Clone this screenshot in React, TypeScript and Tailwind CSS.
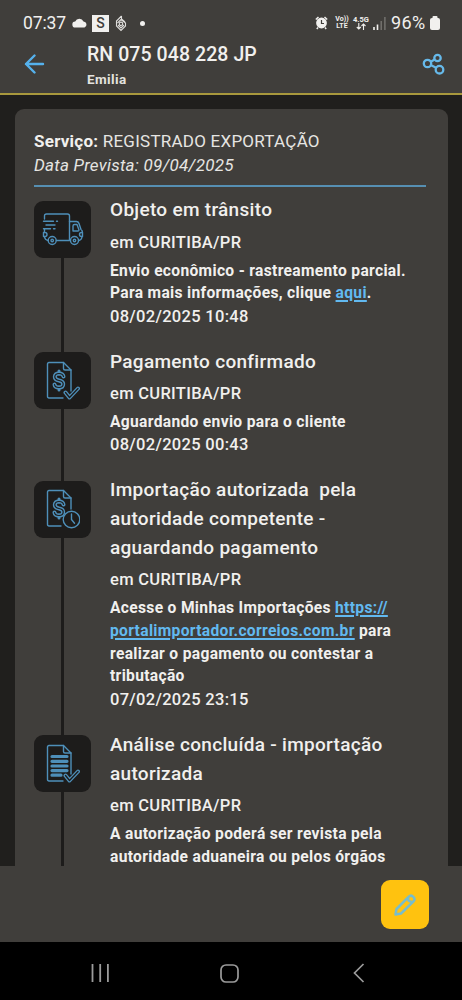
import type { ReactNode } from "react";

function DocIcon({ kind }: { kind: "paid" | "waiting" | "done" }) {
  return (
    <svg width="34" height="40" viewBox="0 0 34 40" fill="none" stroke="#4e8fb9" strokeWidth="1.4" strokeLinecap="round" strokeLinejoin="round">
      <path d={kind === "waiting" ? "M15 37H3q-1.5 0-1.5-1.5V3q0-1.5 1.5-1.5H17.5L25 9v11" : "M17 37H3q-1.5 0-1.5-1.5V3q0-1.5 1.5-1.5H17.5L25 9v21"} />
      <path d="M17.5 1.5V7.5q0 1.5 1.5 1.5H25" />
      {kind !== "done" && (
        <>
          <path d="M17.5 15.500q-.5-3-4.500-3t-4.200 3.300q0 2.900 4.200 3.700t4.200 3.500q0 3.500-4.200 3.500T8.500 23.500" strokeWidth="4" />
          <path d="M13 10v3M13 26v3" strokeWidth="3" />
          <path d="M17.5 15.500q-.5-3-4.500-3t-4.200 3.300q0 2.900 4.200 3.700t4.200 3.500q0 3.500-4.200 3.500T8.500 23.500" stroke="#1d1c1b" strokeWidth="1.2" />
        </>
      )}
      {kind === "done" && <path d="M6 12.5h15M6 17.3h15M6 22h15M6 26.6h15M6 31.2h9" strokeWidth="3.2" />}
      {kind === "waiting" ? (
        <>
          <circle cx="25.5" cy="30.5" r="8.300" fill="#1d1c1b" />
          <path d="M25.5 25v5.500l3 3.800" />
        </>
      ) : (
        <>
          <path d="M19.5 31.500l4 5 8.500-9" strokeWidth="4" />
          <path d="M19.5 31.500l4 5 8.500-9" stroke="#1d1c1b" strokeWidth="1.300" />
        </>
      )}
    </svg>
  );
}

function TruckIcon() {
  return (
    <svg width="42" height="34" viewBox="0 0 42 34" fill="none" stroke="#4e8fb9" strokeWidth="1.4" strokeLinecap="round" strokeLinejoin="round">
      <path d="M2.500 7V4q0-2 2-2H25.500q2 0 2 2V28.500M2.500 17v3M14.500 28.500H28M2.500 25q.5 3 3.500 3.500M1.500 20.500h1.500q2 0 2 2t-2 2H1.500z" />
      <path d="M27.500 9.500h7q1.800 0 2.500 2l2 6q1.500 1 1.500 3M40 25q-.5 3-3 3.500M31 19v-5q0-1.500 1.500-1.500h2.500l2 5.500q0 1-1 1zM40.500 20.500h-1q-2 0-2 2t2 2h1z" />
      <path d="M1.500 9.200h10M14.500 9.200h1M4 13h9M1.500 16.800h7M11.500 16.800h1.500" />
      <circle cx="10.200" cy="28.500" r="4" />
      <circle cx="10.200" cy="28.500" r="1.200" />
      <circle cx="32.500" cy="28.500" r="4" />
      <circle cx="32.500" cy="28.500" r="1.200" />
    </svg>
  );
}

function Event({ icon, title, date, children }: { icon: ReactNode; title: string[]; date?: string; children: ReactNode }) {
  return (
    <li className="relative flex">
      <div className="relative mr-[19px] w-[57px] shrink-0">
        <div className="absolute top-[5px] -bottom-[5px] left-[26.500px] w-[3.500px] bg-[#1d1c1b]" />
        <div className="relative mt-[4.500px] flex h-[57px] w-[57px] items-center justify-center rounded-[9px] bg-[#1d1c1b]">{icon}</div>
      </div>
      <div className="pb-[19.200px] whitespace-pre">
        <h2 className="text-[19px] leading-[28.800px] font-medium tracking-[0.300px]">
          {title.map((t) => <span key={t} className="block">{t}</span>)}
        </h2>
        <p className="mt-[6.700px] mb-[5px] text-[16.500px] leading-[22.800px] font-medium tracking-[0.300px]">em CURITIBA/PR</p>
        <div className="text-[15.600px] leading-[22.800px] font-bold tracking-[0.320px]">{children}</div>
        {date && <time className="mt-[0.500px] block text-[16.500px] leading-[22.800px] font-medium tracking-[0.300px]">{date}</time>}
      </div>
    </li>
  );
}

const link = "text-[#62b9f0] underline decoration-[1.500px] underline-offset-2";

export default function App() {
  return (
    <div className="flex h-[1000px] w-[462px] flex-col overflow-hidden bg-[#403e3b] font-['Roboto',sans-serif] text-[#f1f0ee]">
      <div className="flex h-[45px] shrink-0 items-center pt-px pr-[22px] pl-[23px]">
        <span className="w-[43px] text-[17.500px] tracking-[-0.100px] whitespace-nowrap">07:37</span>
        <svg className="ml-[6px]" width="16" height="10" viewBox="0 0 16 10" fill="#f1f0ee"><path d="M3.500 9.500a3 3 0 0 1-.3-6A4.500 4.500 0 0 1 11.500 3.500a3.100 3.100 0 0 1 1 6z" /></svg>
        <span className="ml-[4px] flex h-[17px] w-[17px] items-center justify-center bg-[#f1f0ee] text-[14px] font-medium text-[#403e3b]">S</span>
        <svg className="ml-[6px]" width="12" height="17" viewBox="0 0 12 17" fill="none" stroke="#dddcda" strokeWidth="1.100"><path d="M6.500 1L1.500 6v5l4.500 4.500 4.500-4.500V8L6 4.500 2.500 8M6.500 1v3L10 7M3 10l3 3 3-3" /><circle cx="6" cy="8.800" r="1.700" /></svg>
        <span className="ml-[13px] h-[5px] w-[5px] rounded-full bg-[#f1f0ee]" />
        <div className="ml-auto flex items-center">
          <svg width="13" height="14" viewBox="0 0 13 14"><circle cx="6.500" cy="7" r="5.400" fill="#f1f0ee" /><path d="M.8 3.500L3.500 1M12.200 3.500L9.500 1M3 11.500l-1.200 1.500M10 11.500l1.200 1.500" stroke="#f1f0ee" strokeWidth="1.500" /><path d="M6.500 4v3.500H9" fill="none" stroke="#403e3b" strokeWidth="1.200" /></svg>
          <span className="ml-[7px] w-[14px] text-center text-[7px] leading-[7px] font-bold whitespace-nowrap">Vo))<br />LTE</span>
          <span className="ml-[4px] flex w-[16px] flex-col items-center text-[7.500px] leading-[7px] font-bold">4.5G
            <svg width="10" height="7" viewBox="0 0 10 7" fill="none" stroke="#f1f0ee" strokeWidth="1.100"><path d="M2.800 0v6M.8 4l2 2 2-2M7.500 7V1M5.500 3l2-2 2 2" /></svg>
          </span>
          <svg className="ml-[4px]" width="13" height="13" viewBox="0 0 13 13"><path d="M1 13v-3M4.500 13V7.500" stroke="#f1f0ee" strokeWidth="1.600" /><path d="M8.200 13V4M11.900 13V0" stroke="#777572" strokeWidth="1.400" /></svg>
          <span className="ml-[5px] w-[36px] text-[18px] leading-[20px] tracking-[0.400px] whitespace-nowrap">96%</span>
          <svg className="ml-[3px]" width="10" height="14" viewBox="0 0 10 14" fill="#f1f0ee"><rect y="2" width="10" height="12" rx="2" /><rect x="2.500" width="5" height="4" rx="1" /></svg>
        </div>
      </div>
      <header className="flex h-[50px] shrink-0 items-start border-b-[2px] border-[#a8983d] pr-[17px] pl-[24px]">
        <svg className="mt-[9px]" width="21" height="20" viewBox="0 0 21 20" fill="none" stroke="#55b1ec" strokeWidth="2.400" strokeLinecap="round" strokeLinejoin="round"><path d="M10.500 1.500L2 10l8.500 8.500M2 10h17" /></svg>
        <div className="ml-[42px] whitespace-nowrap">
          <h1 className="-mt-[1px] text-[19.500px] leading-[22px] font-medium tracking-[0.080px]">RN 075 048 228 JP</h1>
          <p className="mt-[5px] text-[13.500px] leading-[16px] font-bold tracking-[0.400px] text-[#e3e2df]">Emilia</p>
        </div>
        <svg className="mt-[8px] ml-auto" width="23" height="23" viewBox="0 0 23 23" fill="none" stroke="#66b9ea" strokeWidth="2.300"><circle cx="5.500" cy="10.500" r="3.700" /><circle cx="15.500" cy="5" r="3.200" /><circle cx="17.500" cy="16.700" r="3.800" /><path d="M8.700 8.800l4-2.200M8.700 12l5.400 2.800" /></svg>
      </header>
      <main className="h-[771px] shrink-0 overflow-hidden bg-[#201f1d] pt-[14px] pr-[14px] pl-[15px]">
        <section className="h-[757px] overflow-hidden rounded-t-[9px] bg-[#403e3b] pt-[20px] pr-[22px] pl-[19px]">
          <div className="text-[17px] leading-[24px] tracking-[0.240px] whitespace-nowrap text-[#e6e5e2]">
            <p><strong className="font-bold text-[#f1f0ee]">Serviço:</strong> REGISTRADO EXPORTAÇÃO</p>
            <p className="italic">Data Prevista: 09/04/2025</p>
          </div>
          <div className="mt-[8px] h-[2px] bg-[#568fb2]" />
          <ol className="mt-[9.300px]">
            <Event icon={<TruckIcon />} title={["Objeto em trânsito"]} date="08/02/2025 10:48">
              Envio econômico - rastreamento parcial.<br />
              Para mais informações, clique <a className={link}>aqui</a>.
            </Event>
            <Event icon={<DocIcon kind="paid" />} title={["Pagamento confirmado"]} date="08/02/2025 00:43">Aguardando envio para o cliente</Event>
            <Event icon={<DocIcon kind="waiting" />} title={["Importação autorizada  pela", "autoridade competente -", "aguardando pagamento"]} date="07/02/2025 23:15">
              Acesse o Minhas Importações <a className={link}>https://<br />portalimportador.correios.com.br</a> para<br />
              realizar o pagamento ou contestar a<br />tributação
            </Event>
            <Event icon={<DocIcon kind="done" />} title={["Análise concluída - importação", "autorizada"]}>
              A autorização poderá ser revista pela<br />autoridade aduaneira ou pelos órgãos
            </Event>
          </ol>
        </section>
      </main>
      <footer className="flex h-[76px] shrink-0 items-start justify-end pt-[14px] pr-[33px]">
        <button className="flex h-[49px] w-[48px] items-center justify-center rounded-[9px] bg-[#ffc20f]">
          <svg width="24" height="24" viewBox="0 0 24 24" fill="none" stroke="#78bdcb" strokeWidth="2.500" strokeLinejoin="round"><path d="M2.500 21.500l1-5.500L15.500 3.800q2.500-2.300 4.800 0t0 4.800L8 20.500zM15 4.500q-.5 4.500 4.500 4.500" /></svg>
        </button>
      </footer>
      <nav className="flex h-[58px] shrink-0 items-center bg-black pt-[4px] pl-[91px]">
        <svg width="18" height="18" viewBox="0 0 18 18" stroke="#9b9b9b" strokeWidth="1.800"><path d="M1.500 0v18M9.200 0v18M16.900 0v18" /></svg>
        <svg className="ml-[111px]" width="19" height="19" viewBox="0 0 19 19" fill="none" stroke="#9b9b9b" strokeWidth="1.700"><rect x="1" y="1" width="17" height="17" rx="5" /></svg>
        <svg className="ml-[114px]" width="12" height="20" viewBox="0 0 12 20" fill="none" stroke="#9b9b9b" strokeWidth="1.700"><path d="M10.500 1L1.500 10l9 9" /></svg>
      </nav>
    </div>
  );
}
